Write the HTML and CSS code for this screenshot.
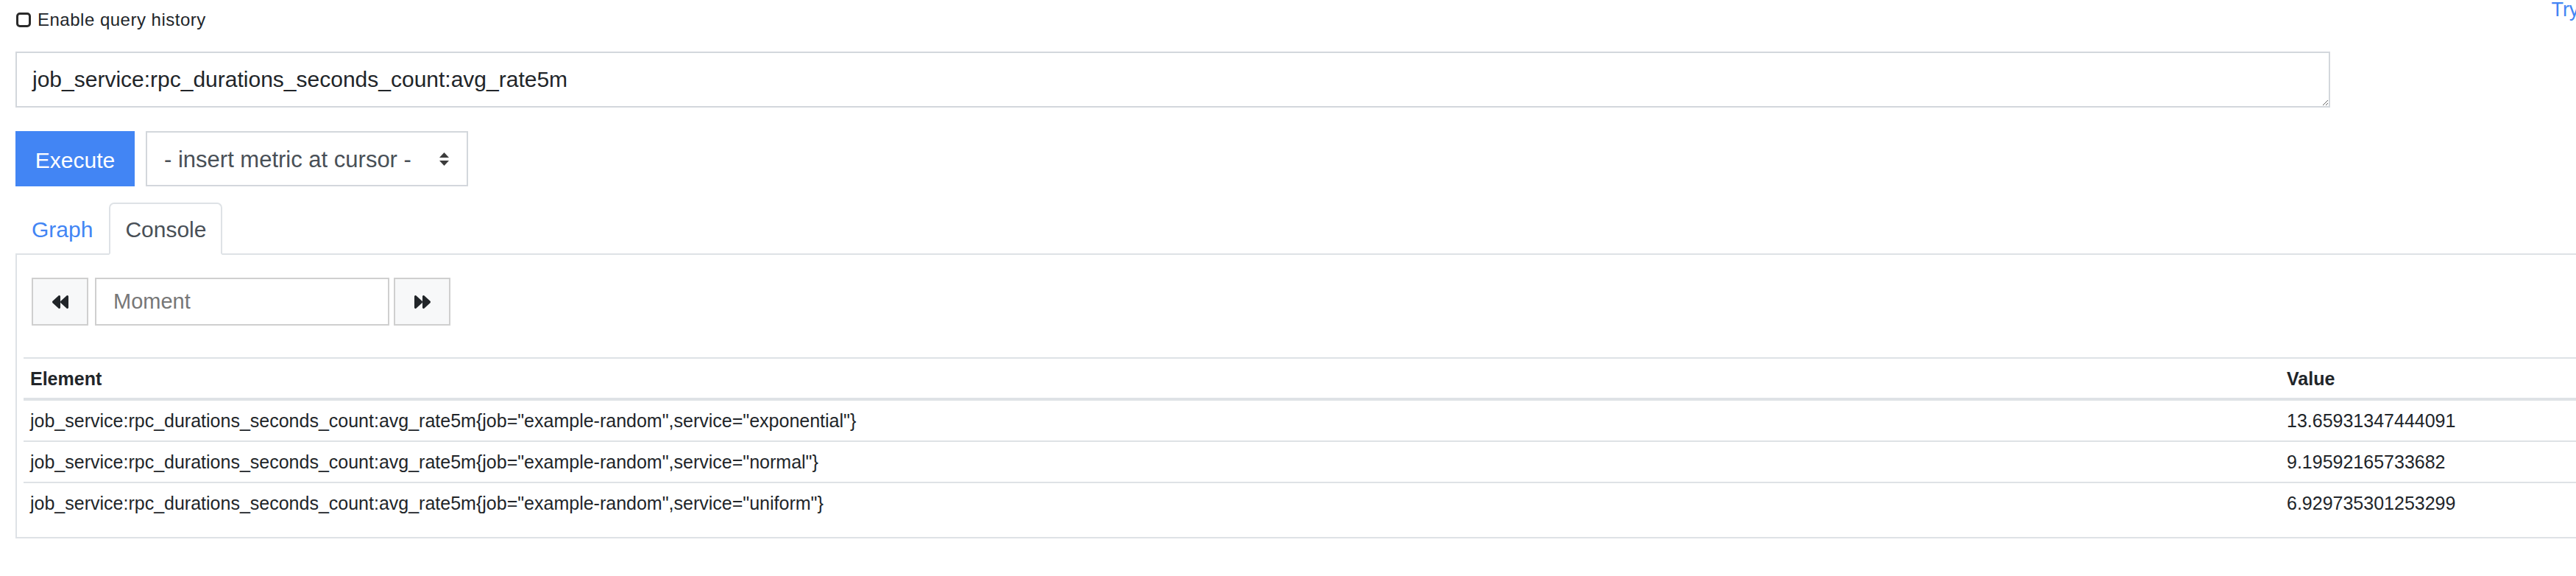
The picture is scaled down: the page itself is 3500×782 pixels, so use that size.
FILE: index.html
```html
<!DOCTYPE html>
<html lang="en">
<head>
<meta charset="utf-8">
<title>Prometheus Time Series Collection and Processing Server</title>
<link rel="stylesheet" href="styles.css">
</head>
<body>
<div class="page">
  <div class="top-row">
    <label class="history-toggle"><input type="checkbox" class="checkbox">Enable query history</label>
    <a class="react-link" href="#">Try experimental React UI</a>
  </div>

  <textarea class="expr" rows="1">job_service:rpc_durations_seconds_count:avg_rate5m</textarea>

  <div class="controls">
    <button class="btn-execute" type="button">Execute</button>
    <div class="metric-select">
      <span>- insert metric at cursor -</span>
      <svg class="select-arrows" width="13" height="18" viewBox="0 0 13 18"><path d="M6.5 0 L13 7 H0 Z M0 11 H13 L6.5 18 Z"/></svg>
    </div>
  </div>

  <div class="nav-tabs">
    <a class="tab" href="#">Graph</a>
    <a class="tab active" href="#">Console</a>
  </div>

  <div class="tab-panel">
    <div class="moment-group">
      <button class="btn-step" type="button">
        <svg class="step-icon" width="22" height="18" viewBox="0 64 512 384" preserveAspectRatio="none"><path d="M11.5 280.6l192 160c20.6 17.2 52.5 2.8 52.5-24.6V96c0-27.4-31.9-41.8-52.5-24.6l-192 160c-15.3 12.8-15.3 36.4 0 49.2zm256 0l192 160c20.6 17.2 52.5 2.8 52.5-24.6V96c0-27.4-31.9-41.8-52.5-24.6l-192 160c-15.3 12.8-15.3 36.4 0 49.2z"/></svg>
      </button>
      <input class="moment-input" type="text" placeholder="Moment">
      <button class="btn-step" type="button">
        <svg class="step-icon flip" width="22" height="18" viewBox="0 64 512 384" preserveAspectRatio="none"><path d="M11.5 280.6l192 160c20.6 17.2 52.5 2.8 52.5-24.6V96c0-27.4-31.9-41.8-52.5-24.6l-192 160c-15.3 12.8-15.3 36.4 0 49.2zm256 0l192 160c20.6 17.2 52.5 2.8 52.5-24.6V96c0-27.4-31.9-41.8-52.5-24.6l-192 160c-15.3 12.8-15.3 36.4 0 49.2z"/></svg>
      </button>
    </div>

    <table class="data-table">
      <thead>
        <tr><th>Element</th><th class="col-value">Value</th></tr>
      </thead>
      <tbody>
        <tr><td>job_service:rpc_durations_seconds_count:avg_rate5m{job="example-random",service="exponential"}</td><td>13.65931347444091</td></tr>
        <tr><td>job_service:rpc_durations_seconds_count:avg_rate5m{job="example-random",service="normal"}</td><td>9.19592165733682</td></tr>
        <tr><td>job_service:rpc_durations_seconds_count:avg_rate5m{job="example-random",service="uniform"}</td><td>6.929735301253299</td></tr>
      </tbody>
    </table>
  </div>
</div>
</body>
</html>
```

FILE: styles.css
```css
html, body {
  margin: 0;
  padding: 0;
  overflow: hidden;
  background: #ffffff;
}

body {
  font-family: "Liberation Sans", Arial, sans-serif;
  color: #212529;
}

.page {
  width: 3758px;
  padding: 0 21px;
}

/* top row */
.top-row {
  display: flex;
  justify-content: space-between;
  align-items: flex-start;
  height: 42px;
}

.history-toggle {
  display: flex;
  align-items: center;
  margin-top: 12px;
  height: 30px;
  font-size: 24px;
  line-height: 30px;
  letter-spacing: 0.5px;
  color: #212529;
}

.checkbox {
  -webkit-appearance: none;
  appearance: none;
  box-sizing: border-box;
  width: 20px;
  height: 20px;
  margin: 0 9px 0 1px;
  border: 3px solid #2a2a2a;
  border-radius: 5px;
  background: #ffffff;
}

.react-link {
  font-size: 27px;
  line-height: 27px;
  color: #4285f4;
  text-decoration: none;
}

/* expression input */
.expr {
  display: block;
  box-sizing: border-box;
  width: 3145px;
  height: 76px;
  margin: 28px 0 0;
  padding: 14px 21px;
  border: 2px solid #d3d7dc;
  border-radius: 0;
  font-family: "Liberation Sans", Arial, sans-serif;
  font-size: 30px;
  line-height: 44px;
  color: #212529;
  overflow: hidden;
  outline: none;
}

/* execute row */
.controls {
  display: flex;
  gap: 15px;
  margin-top: 32px;
  height: 75px;
}

.btn-execute {
  box-sizing: border-box;
  width: 162px;
  height: 75px;
  padding: 4px 0 0;
  border: none;
  border-radius: 0;
  background: #4285f4;
  color: #ffffff;
  font-family: "Liberation Sans", Arial, sans-serif;
  font-size: 30px;
  line-height: 71px;
}

.metric-select {
  display: flex;
  align-items: center;
  justify-content: space-between;
  box-sizing: border-box;
  width: 438px;
  height: 75px;
  padding: 3px 24px 0 23px;
  border: 2px solid #d3d7dc;
  font-size: 31px;
  color: #495057;
}

.select-arrows {
  fill: #3c3c3c;
  margin-top: -3px;
}

/* tabs */
.nav-tabs {
  display: flex;
  margin-top: 22px;
  border-bottom: 2px solid #dee2e6;
}

.tab {
  padding: 12px 20px 10px;
  margin-bottom: -2px;
  border: 2px solid transparent;
  border-radius: 7px 7px 0 0;
  font-size: 30px;
  line-height: 45px;
  color: #4285f4;
  text-decoration: none;
}

.tab.active {
  color: #495057;
  background: #ffffff;
  border-color: #dee2e6 #dee2e6 #ffffff;
}

.tab-panel {
  border: 2px solid #dee2e6;
  border-top: none;
  padding: 31px 9px 19px;
}

/* moment controls */
.moment-group {
  display: flex;
  height: 65px;
  margin-left: 11px;
}

.btn-step {
  display: flex;
  align-items: center;
  justify-content: center;
  box-sizing: border-box;
  width: 77px;
  height: 65px;
  padding: 0;
  border: 2px solid #cfcfcf;
  border-radius: 0;
  background: #f7f8f9;
}

.step-icon {
  fill: #212529;
}

.step-icon.flip {
  transform: scaleX(-1);
}

.moment-input {
  box-sizing: border-box;
  width: 400px;
  height: 65px;
  margin: 0 6px 0 9px;
  padding: 0 23px;
  border: 2px solid #cfcfcf;
  border-radius: 0;
  font-family: "Liberation Sans", Arial, sans-serif;
  font-size: 29px;
  color: #495057;
  outline: none;
}

.moment-input::placeholder {
  color: #777777;
}

/* data table */
.data-table {
  width: 100%;
  margin-top: 43px;
  border-spacing: 0;
  font-size: 25px;
  line-height: 38px;
  color: #212529;
}

.data-table th,
.data-table td {
  padding: 8px 9px;
  text-align: left;
  vertical-align: top;
}

.data-table th {
  padding-bottom: 7px;
  border-top: 2px solid #dee2e6;
  border-bottom: 4px solid #dee2e6;
  font-weight: bold;
}

.data-table td {
  border-top: 2px solid #dee2e6;
}

.data-table tbody tr:first-child td {
  border-top: none;
}

.data-table .col-value {
  width: 652px;
}
```
